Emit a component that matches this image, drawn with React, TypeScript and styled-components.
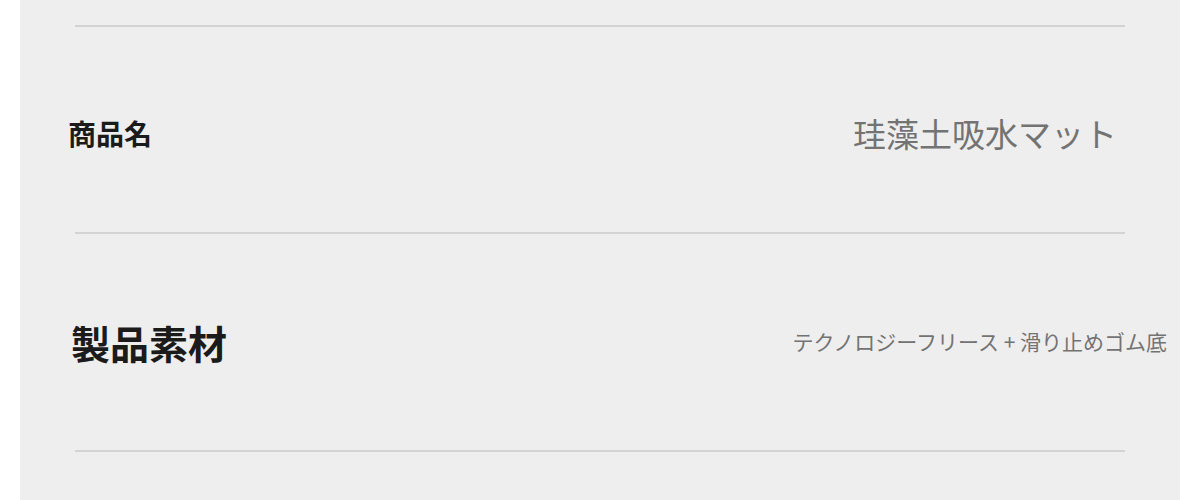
import styled, { createGlobalStyle } from 'styled-components';

const GlobalStyle = createGlobalStyle`
  html, body {
    margin: 0;
    padding: 0;
    background: #ffffff;
  }
  body {
    font-family: 'Noto Sans CJK JP', 'Noto Sans', sans-serif;
  }
`;

// spec table panel
const SpecPanel = styled.section`
  width: 1160px;
  height: 500px;
  margin-left: 20px;
  padding-top: 25px;
  box-sizing: border-box;
  background: #eeeeee;
  display: flex;
  flex-direction: column;
`;

const Divider = styled.div`
  height: 2px;
  margin: 0 55px;
  background: #d3d3d3;
  flex-shrink: 0;
`;

const SpecRow = styled.div<{ $height: number; $offset: number; $left: number; $right: number }>`
  height: ${(p) => p.$height}px;
  padding: ${(p) => p.$offset}px ${(p) => p.$right}px 0 ${(p) => p.$left}px;
  box-sizing: border-box;
  display: flex;
  align-items: center;
  justify-content: space-between;
`;

const Label = styled.span<{ $size: number }>`
  font-size: ${(p) => p.$size}px;
  font-weight: 700;
  color: #1b1b1b;
  line-height: 1.2;
`;

const Value = styled.span<{ $size: number }>`
  font-size: ${(p) => p.$size}px;
  font-weight: 400;
  color: #737373;
  line-height: 1.2;
  white-space: pre;
`;

const App = () => {
  return (
    <>
      <GlobalStyle />
      <SpecPanel>
        <Divider />
        <SpecRow $height={205} $offset={9} $left={48} $right={63}>
          <Label $size={28}>商品名</Label>
          <Value $size={33}>珪藻土吸水マット</Value>
        </SpecRow>
        <Divider />
        <SpecRow $height={216} $offset={0} $left={51} $right={13}>
          <Label $size={39}>製品素材</Label>
          <Value $size={21}>テクノロジーフリース + 滑り止めゴム底</Value>
        </SpecRow>
        <Divider />
      </SpecPanel>
    </>
  );
};

export default App;
